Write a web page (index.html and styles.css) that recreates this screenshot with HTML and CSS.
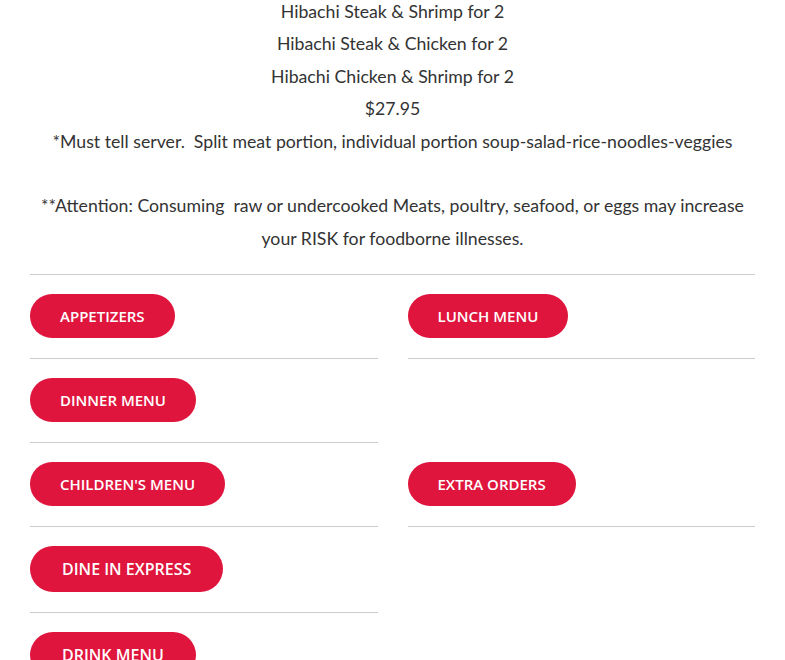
FILE: index.html
```html
<!DOCTYPE html>
<html>
<head>
<meta charset="utf-8">
<link rel="stylesheet" href="styles.css">
</head>
<body>
<div class="page">
  <div class="intro">
    <p>Hibachi Steak &amp; Shrimp for 2</p>
    <p>Hibachi Steak &amp; Chicken for 2</p>
    <p>Hibachi Chicken &amp; Shrimp for 2</p>
    <p>$27.95</p>
    <p>*Must tell server.&nbsp; Split meat portion, individual portion soup-salad-rice-noodles-veggies</p>
    <p>&nbsp;</p>
    <p>**Attention: Consuming&nbsp; raw or undercooked Meats, poultry, seafood, or eggs may increase your RISK for foodborne illnesses.</p>
  </div>
  <div class="menus">
    <div class="cell"><a class="btn">Appetizers</a></div>
    <div class="cell"><a class="btn">Lunch Menu</a></div>
    <div class="cell"><a class="btn">Dinner Menu</a></div>
    <div class="cell empty"></div>
    <div class="cell"><a class="btn">Children's Menu</a></div>
    <div class="cell"><a class="btn">Extra Orders</a></div>
    <div class="cell"><a class="btn big">Dine In Express</a></div>
    <div class="cell empty"></div>
    <div class="cell"><a class="btn big">Drink Menu</a></div>
    <div class="cell empty"></div>
  </div>
</div>
</body>
</html>
```
FILE: styles.css
```css
html, body {
  margin: 0;
  padding: 0;
  background: #fff;
}
.page {
  padding: 0 30px;
  margin-top: -5px;
}
.intro {
  font-family: Lato, "Liberation Sans", sans-serif;
  font-size: 17.7px;
  line-height: 32.4px;
  color: #333;
  text-align: center;
  padding: 1px 0 19px;
  border-bottom: 1px solid #ccc;
}
.intro p {
  margin: 0;
}
.menus {
  display: grid;
  grid-template-columns: 1fr 1fr;
  column-gap: 30px;
}
.cell {
  padding: 19px 0 20px;
  border-bottom: 1px solid #ccc;
}
.cell.empty {
  border-bottom: none;
}
.btn {
  display: inline-block;
  background: #e0153d;
  color: #fff;
  font-family: "Open Sans", "Liberation Sans", sans-serif;
  font-weight: 600;
  font-size: 15px;
  text-transform: uppercase;
  line-height: 44px;
  height: 44px;
  padding: 0 30px;
  border-radius: 23px;
}
.btn.big {
  font-size: 16px;
  line-height: 46px;
  height: 46px;
  padding: 0 32px;
}
```
